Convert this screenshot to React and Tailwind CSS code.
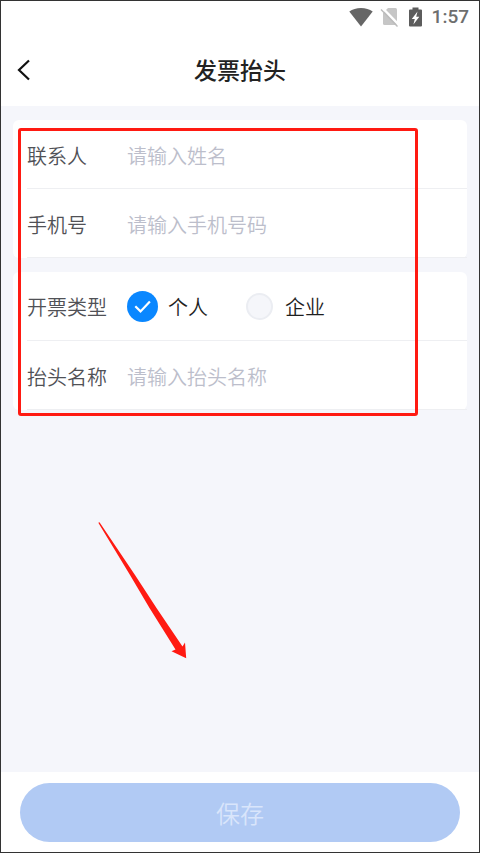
import { useState } from "react";

const invoiceTypes = [
  { value: "personal", label: "个人" },
  { value: "company", label: "企业" },
];

function StatusBar() {
  return (
    <div className="flex h-8 items-center justify-end pr-[10px] text-[#666]">
      <svg className="h-5 w-6" viewBox="0 0 24 20" fill="currentColor" aria-hidden="true">
        <path d="M.3 4.6C3.4 2.200 7.500.900 12 .900s8.600 1.300 11.700 3.700L12 19.400z" />
      </svg>
      <svg className="ml-[7px] h-5 w-[19px]" viewBox="0 0 19 20" aria-hidden="true">
        <path d="M8 1h7.500a1.500 1.500 0 0 1 1.500 1.500v14a1.500 1.500 0 0 1-1.500 1.500h-11A1.500 1.500 0 0 1 3 16.500V6z" fill="#c6c6c6" />
        <path d="M2.500 1 18.500 17.500" stroke="#fff" strokeWidth="2.500" />
        <path d="M1 2.500 17.500 19.500" stroke="#bcbcbc" strokeWidth="1.400" />
      </svg>
      <svg className="ml-[10px] h-5 w-[13px]" viewBox="0 0 13 20" aria-hidden="true">
        <path d="M3.500.500h6v2H12q1 0 1 1v15q0 1-1 1H1q-1 0-1-1v-15q0-1 1-1h2.500z" fill="#5c5c5c" />
        <path d="M8.500 4.500 2.800 12h3l-1.400 5.500L10.300 9.800H7.200z" fill="#fff" />
      </svg>
      <span className="ml-[10px] font-['Roboto',sans-serif] text-[19px] leading-6 font-medium text-[#6e6e6e]">1:57</span>
    </div>
  );
}

function Card({ children }) {
  return <section className="rounded-md bg-white pl-[14px]">{children}</section>;
}

function Field({ id, label, placeholder, type = "text" }) {
  return (
    <div className="flex h-[69px] items-center border-b border-[#eeeff2] pt-[3px]">
      <label htmlFor={id} className="w-[100px] shrink-0 text-[#505156]">{label}</label>
      <input
        id={id}
        type={type}
        placeholder={placeholder}
        className="min-w-0 flex-1 bg-transparent text-[#222] outline-none placeholder:text-[#bcbecb]"
      />
    </div>
  );
}

function TypeRadio({ value, label, checked, onChange }) {
  return (
    <label className="flex items-center gap-[10px] text-[#1f1f1f]">
      <span className="relative flex size-[31px] items-center justify-center">
        <input
          type="radio"
          name="invoiceType"
          value={value}
          checked={checked}
          onChange={() => onChange(value)}
          className="size-[27px] appearance-none rounded-full border-2 border-[#ebedf2] bg-[#f5f6fa] checked:size-[31px] checked:border-0 checked:bg-[#0a87ff]"
        />
        {checked && (
          <svg className="pointer-events-none absolute inset-0" viewBox="0 0 31 31" fill="none" aria-hidden="true">
            <path d="M8.300 15.300 13.500 20.400 22.900 10.500" stroke="#fff" strokeWidth="2.200" />
          </svg>
        )}
      </span>
      {label}
    </label>
  );
}

export default function App() {
  const [type, setType] = useState("personal");

  return (
    <div className="flex min-h-screen flex-col border border-[#333] bg-[#f5f6fb] font-['Noto_Sans_CJK_SC',sans-serif] text-xl font-[350]">
      {/* Header */}
      <header className="bg-white">
        <StatusBar />
        <div className="grid h-[73px] grid-cols-[1fr_auto_1fr] items-center px-[10px]">
          <button type="button" aria-label="返回" className="flex size-6 items-center justify-center">
            <svg className="h-[22px] w-4" viewBox="0 0 16 22" fill="none" aria-hidden="true">
              <path d="M14 1.500 4 11 14 20.500" stroke="#111" strokeWidth="2.200" />
            </svg>
          </button>
          <h1 className="text-[23px] font-medium text-[#222]">发票抬头</h1>
        </div>
      </header>

      {/* Form */}
      <main className="relative flex-1">
        <form id="invoice" className="relative flex flex-col gap-[14px] px-3 pt-[14px]">
          <Card>
            <Field id="contact" label="联系人" placeholder="请输入姓名" />
            <Field id="phone" label="手机号" placeholder="请输入手机号码" type="tel" />
          </Card>
          <Card>
            <div role="radiogroup" aria-labelledby="type-label" className="flex h-[69px] items-center border-b border-[#eeeff2] pt-px">
              <span id="type-label" className="w-[100px] shrink-0 text-[#505156]">开票类型</span>
              <div className="flex gap-9">
                {invoiceTypes.map((t) => (
                  <TypeRadio key={t.value} {...t} checked={type === t.value} onChange={setType} />
                ))}
              </div>
            </div>
            <Field id="title" label="抬头名称" placeholder="请输入抬头名称" />
          </Card>

          {/* Highlight frame */}
          <div className="pointer-events-none absolute top-[22px] right-[61px] -bottom-[6px] left-[17px] rounded-[3px] border-[3px] border-[#ff1a12]" />
        </form>

        {/* Arrow */}
        <svg className="pointer-events-none absolute top-[414px] left-[96px] h-[140px] w-[92px]" viewBox="0 0 92 140" aria-hidden="true">
          <path d="M1.300 2.800 2.500 2.200 38 55 59.500 88 85.500 126.500 88 122.500 89.200 138.200 74.500 131.200 78.500 129.500 52.500 88 33 55z" fill="#ff1a12" />
        </svg>
      </main>

      {/* Save */}
      <footer className="bg-white px-[19px] pt-[11px] pb-[10px]">
        <button type="submit" form="invoice" className="h-[59px] w-full rounded-full bg-[#b1caf4] text-2xl text-[#d9e5fb]">
          保存
        </button>
      </footer>
    </div>
  );
}
